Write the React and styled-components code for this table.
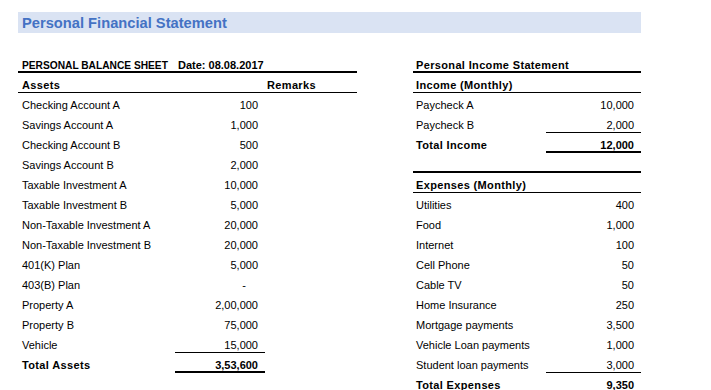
import React from "react";
import styled, { createGlobalStyle } from "styled-components";

const GlobalStyle = createGlobalStyle`
  html, body {
    margin: 0;
    padding: 0;
    background: #ffffff;
    overflow: hidden;
  }
  body {
    font-family: "Liberation Sans", Arial, sans-serif;
    color: #000000;
  }
`;

const Page = styled.div`
  padding: 12px 0 0 18px;
  width: 623px;
`;

const TitleBar = styled.div`
  height: 21px;
  background: #dae3f3;
  display: flex;
  align-items: center;
  padding-left: 4px;
`;

const Title = styled.h1`
  margin: 0;
  font-size: 14.7px;
  font-weight: bold;
  color: #4472c4;
  line-height: 18px;
`;

const Sheets = styled.div`
  display: flex;
  gap: 56px;
  margin-top: 20px;
`;

const Sheet = styled.div`
  display: grid;
  grid-template-columns: ${(p) => p.$cols};
  grid-auto-rows: 20px;
`;

const rules = {
  thin: "inset 0 -1px 0 #000",
  thick: "inset 0 -2px 0 #000",
};

const Cell = styled.div`
  box-sizing: border-box;
  display: flex;
  align-items: flex-end;
  justify-content: ${(p) => (p.$right ? "flex-end" : "flex-start")};
  padding: ${(p) => (p.$right ? "0 7px 1px 0" : `0 0 1px ${p.$indent ?? 4}px`)};
  font-size: 11px;
  line-height: 13px;
  font-weight: ${(p) => (p.$bold ? "bold" : "normal")};
  letter-spacing: ${(p) => (p.$bold && !p.$right ? "0.35px" : "0")};
  white-space: nowrap;
  box-shadow: ${(p) => rules[p.$rule] || "none"};
  grid-column: ${(p) => (p.$span ? "1 / -1" : "auto")};
`;

const SheetTitle = styled.span`
  font-size: 10.2px;
  letter-spacing: 0;
`;

const Dash = styled.span`
  margin-right: 12px;
`;

const assets = [
  ["Checking Account A", "100"],
  ["Savings Account A", "1,000"],
  ["Checking Account B", "500"],
  ["Savings Account B", "2,000"],
  ["Taxable Investment A", "10,000"],
  ["Taxable Investment B", "5,000"],
  ["Non-Taxable Investment A", "20,000"],
  ["Non-Taxable Investment B", "20,000"],
  ["401(K) Plan", "5,000"],
  ["403(B) Plan", "-"],
  ["Property A", "2,00,000"],
  ["Property B", "75,000"],
  ["Vehicle", "15,000"],
];

const income = [
  ["Paycheck A", "10,000"],
  ["Paycheck B", "2,000"],
];

const expenses = [
  ["Utilities", "400"],
  ["Food", "1,000"],
  ["Internet", "100"],
  ["Cell Phone", "50"],
  ["Cable TV", "50"],
  ["Home Insurance", "250"],
  ["Mortgage payments", "3,500"],
  ["Vehicle Loan payments", "1,000"],
  ["Student loan payments", "3,000"],
];

const BalanceSheet = () => (
  <Sheet $cols="157px 90px 92px">
    <Cell $bold $rule="thick">
      <SheetTitle>PERSONAL BALANCE SHEET</SheetTitle>
    </Cell>
    <Cell $rule="thick" $indent={3}>
      <b>Date: 08.08.2017</b>
    </Cell>
    <Cell $rule="thick" />

    <Cell $bold $rule="thin">Assets</Cell>
    <Cell $rule="thin" />
    <Cell $bold $rule="thin" $indent={2}>Remarks</Cell>

    {assets.map(([label, value], i) => (
      <React.Fragment key={label}>
        <Cell>{label}</Cell>
        <Cell $right $rule={i === assets.length - 1 ? "thin" : undefined}>
          {value === "-" ? <Dash>-</Dash> : value}
        </Cell>
        <Cell />
      </React.Fragment>
    ))}

    <Cell $bold>Total Assets</Cell>
    <Cell $bold $right $rule="thick">3,53,600</Cell>
    <Cell />
  </Sheet>
);

const IncomeStatement = () => (
  <Sheet $cols="133px 95px">
    <Cell $bold $span $rule="thick" $indent={3}>Personal Income Statement</Cell>
    <Cell $bold $span $rule="thin" $indent={3}>Income (Monthly)</Cell>

    {income.map(([label, value], i) => (
      <React.Fragment key={label}>
        <Cell $indent={3}>{label}</Cell>
        <Cell $right $rule={i === income.length - 1 ? "thin" : undefined}>{value}</Cell>
      </React.Fragment>
    ))}

    <Cell $bold $indent={3}>Total Income</Cell>
    <Cell $bold $right $rule="thick">12,000</Cell>

    <Cell $span $rule="thick" />
    <Cell $bold $span $rule="thin" $indent={3}>Expenses (Monthly)</Cell>

    {expenses.map(([label, value], i) => (
      <React.Fragment key={label}>
        <Cell $indent={3}>{label}</Cell>
        <Cell $right $rule={i === expenses.length - 1 ? "thin" : undefined}>{value}</Cell>
      </React.Fragment>
    ))}

    <Cell $bold $indent={3}>Total Expenses</Cell>
    <Cell $bold $right>9,350</Cell>
  </Sheet>
);

export default function App() {
  return (
    <>
      <GlobalStyle />
      <Page>
        <TitleBar>
          <Title>Personal Financial Statement</Title>
        </TitleBar>
        <Sheets>
          <BalanceSheet />
          <IncomeStatement />
        </Sheets>
      </Page>
    </>
  );
}
